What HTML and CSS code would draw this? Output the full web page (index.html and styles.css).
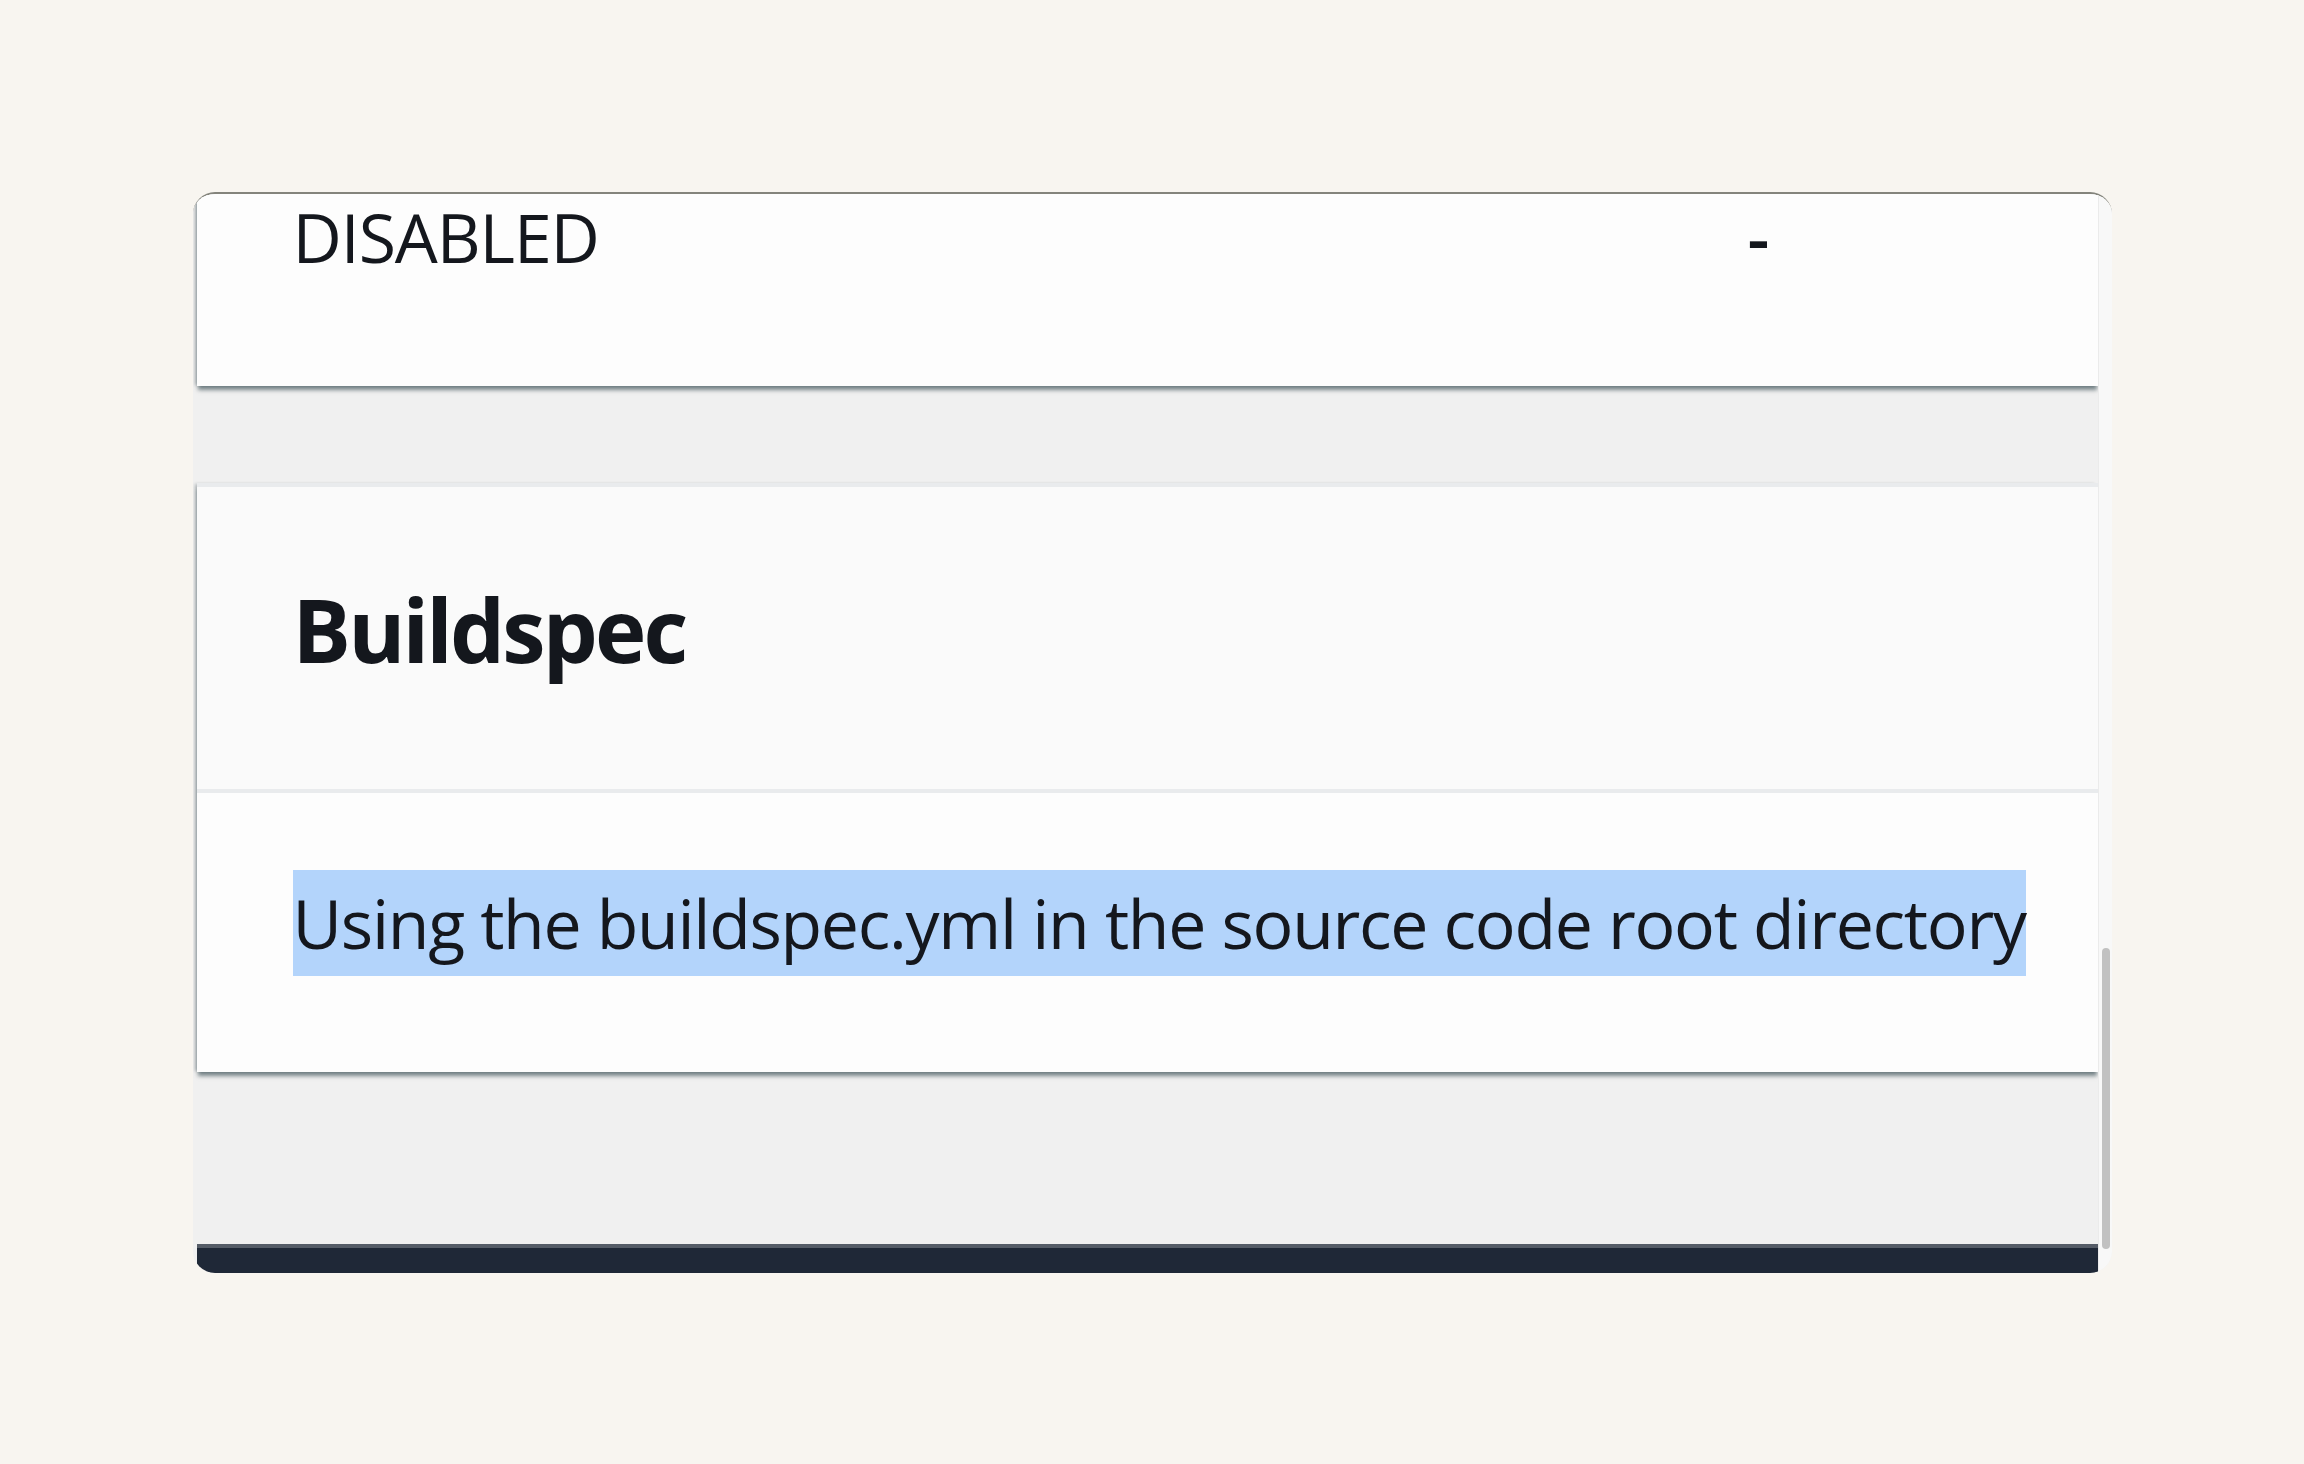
FILE: index.html
```html
<!DOCTYPE html>
<html>

	<head>
		<meta charset="UTF-8">
		<title>Buildspec</title>
		<link rel="stylesheet" href="styles.css">
	</head>

	<body>
		<div class="window">
			<div class="viewport">
				<!-- row scrolled up a little, cut by the window top -->
				<section class="card card-top">
					<div class="kv-row">
						<div class="kv-value">DISABLED</div>
						<div class="kv-value kv-empty">-</div>
					</div>
				</section>
				<section class="card card-spec">
					<header class="card-header">
						<h2>Buildspec</h2>
					</header>
					<div class="card-body">
						<span class="selected">Using the buildspec.yml in the source code root directory</span>
					</div>
				</section>
				<footer class="footer"></footer>
			</div>
			<div class="scrollbar">
				<div class="thumb"></div>
			</div>
		</div>
	</body>

</html>
```

FILE: styles.css
```css
body {
	margin: 0;
	height: 100vh;
	background: #f8f5f0;
	display: flex;
	align-items: center;
	justify-content: center;
	font-family: "Open Sans", "Noto Sans", sans-serif;
	color: #14171d;
}

.window {
	width: 1919px;
	height: 1081px;
	box-sizing: border-box;
	border-top: 2px solid #84847c;
	border-radius: 22px;
	overflow: hidden;
	display: flex;
	background: #f0f0f0;
}

.viewport {
	flex: 1;
	min-width: 0;
	display: flex;
	flex-direction: column;
	padding-left: 4px;
	background: #f0f0f0;
}

.card {
	background: #fdfdfd;
	box-shadow: 0 5px 4px -1px rgba(0, 28, 36, 0.5), -3px 0 3px -1px rgba(0, 28, 36, 0.25);
}

.card-top {
	height: 192px;
}

.kv-row {
	display: grid;
	grid-template-columns: 1455px 1fr;
	padding-left: 96px;
	font-size: 68px;
	line-height: 85px;
	letter-spacing: -1.1px;
}

.kv-empty {
	font-weight: 600;
}

.card-spec {
	margin-top: 97px;
	border-top: 4px solid #e9ebed;
}

.card-header {
	background: #fafafa;
	padding: 87px 96px 105px;
	border-bottom: 4px solid #e9ebed;
}

.card-header h2 {
	margin: 0;
	font-size: 87px;
	line-height: 110px;
	font-weight: 700;
	letter-spacing: -2.8px;
}

.card-body {
	padding: 77px 96px 96px;
	font-size: 68px;
	line-height: 106px;
}

.selected {
	display: inline-block;
	white-space: nowrap;
	letter-spacing: -1.3px;
	background: #b3d4fb;
}

.footer {
	margin-top: auto;
	height: 25px;
	border-top: 4px solid #555c67;
	background: #1f2837;
}

.scrollbar {
	flex: 0 0 14px;
	box-sizing: border-box;
	border-left: 1px solid #ebebeb;
	background: #f8f8f8;
}

.thumb {
	width: 8px;
	height: 301px;
	margin: 754px 0 0 3px;
	border-radius: 4px;
	background: #c1c1c1;
}
```
